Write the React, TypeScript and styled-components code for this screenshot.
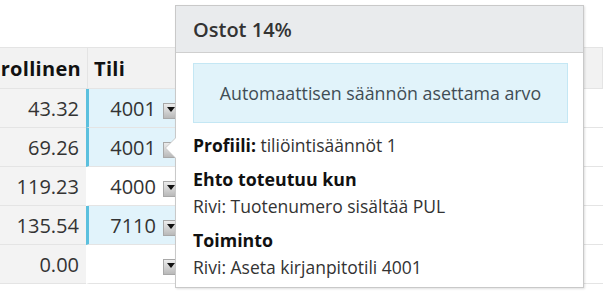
import { createGlobalStyle, styled } from "styled-components";

type Row = { amount: string; account: string; auto: boolean };

const rows: Row[] = [
  { amount: "43.32", account: "4001", auto: true },
  { amount: "69.26", account: "4001", auto: true },
  { amount: "119.23", account: "4000", auto: false },
  { amount: "135.54", account: "7110", auto: true },
  { amount: "0.00", account: "", auto: false },
];

const GlobalStyle = createGlobalStyle`
  html, body {
    margin: 0;
    padding: 0;
    background: #ffffff;
    font-family: "Open Sans", "Noto Sans", sans-serif;
    color: #333;
  }
`;

export default function App() {
  return (
    <Page>
      <GlobalStyle />
      <Table>
        <HeaderRow>
          <HeaderCell $clip>Verollinen</HeaderCell>
          <HeaderCell>Tili</HeaderCell>
          <HeaderCell />
        </HeaderRow>
        {rows.map((row, i) => (
          <BodyRow key={i}>
            <AmountCell>{row.amount}</AmountCell>
            <AccountCell $auto={row.auto}>
              <span>{row.account}</span>
              <DropButton />
            </AccountCell>
            <RestCell />
          </BodyRow>
        ))}
      </Table>

      <Popover>
        <PopoverTitle>Ostot 14%</PopoverTitle>
        <PopoverBody>
          <InfoBox>Automaattisen säännön asettama arvo</InfoBox>
          <Line>
            <strong>Profiili:</strong> tiliöintisäännöt 1
          </Line>
          <Section>
            <Heading>Ehto toteutuu kun</Heading>
            <Line>Rivi: Tuotenumero sisältää PUL</Line>
          </Section>
          <Section>
            <Heading>Toiminto</Heading>
            <Line>Rivi: Aseta kirjanpitotili 4001</Line>
          </Section>
        </PopoverBody>
      </Popover>
    </Page>
  );
}

const Page = styled.div`
  position: relative;
  width: 603px;
  height: 295px;
  overflow: hidden;
  padding-top: 47px;
  box-sizing: border-box;
`;

const Table = styled.div`
  display: grid;
  grid-template-columns: 88px 95px 1fr;
  border-top: 1px solid #e4e4e4;
`;

const HeaderRow = styled.div`
  display: contents;
`;

const HeaderCell = styled.div<{ $clip?: boolean }>`
  height: 40px;
  display: flex;
  align-items: center;
  justify-content: ${({ $clip }) => ($clip ? "flex-end" : "flex-start")};
  padding: 0 6px;
  background: #f2f2f2;
  border-bottom: 1px solid #e4e4e4;
  border-right: 1px solid #e4e4e4;
  font-size: 20px;
  font-weight: 700;
  letter-spacing: 0.3px;
  color: #111;
  white-space: nowrap;
  overflow: hidden;
  box-sizing: content-box;
`;

const BodyRow = styled.div`
  display: contents;
`;

const AmountCell = styled.div`
  height: 38px;
  display: flex;
  align-items: center;
  justify-content: flex-end;
  padding-right: 8px;
  background: #f3f3f3;
  border-bottom: 1px solid #e4e4e4;
  border-right: 1px solid #e4e4e4;
  font-size: 20px;
  color: #333;
`;

const AccountCell = styled.div<{ $auto: boolean }>`
  height: 38px;
  display: flex;
  align-items: center;
  justify-content: flex-end;
  gap: 7px;
  padding-right: 3px;
  background: ${({ $auto }) => ($auto ? "#e1f3fb" : "#ffffff")};
  border-left: 3px solid ${({ $auto }) => ($auto ? "#5bc0de" : "transparent")};
  margin-left: -2px;
  border-bottom: 1px solid #e4e4e4;
  border-right: 1px solid #e4e4e4;
  font-size: 20px;
  color: #333;
`;

const DropButton = styled.span`
  position: relative;
  align-self: flex-end;
  margin-bottom: 8px;
  width: 14px;
  height: 14px;
  border: 1px solid #a8a8a8;
  background: linear-gradient(#ececec, #b9b9b9);

  &::after {
    content: "";
    position: absolute;
    left: 3px;
    top: 3px;
    border-left: 4px solid transparent;
    border-right: 4px solid transparent;
    border-top: 5px solid #111;
  }
`;

const RestCell = styled.div`
  height: 38px;
  border-bottom: 1px solid #e4e4e4;
`;

const Popover = styled.div`
  position: absolute;
  top: 5px;
  left: 175px;
  width: 407px;
  height: 281px;
  background: #fff;
  border: 1px solid #c9c9c9;
  box-shadow: 1px 1px 2px rgba(0, 0, 0, 0.12);
  display: flex;
  flex-direction: column;

  &::before,
  &::after {
    content: "";
    position: absolute;
    top: 132px;
    border-top: 10px solid transparent;
    border-bottom: 10px solid transparent;
  }

  &::before {
    left: -11px;
    border-right: 10px solid #c9c9c9;
  }

  &::after {
    left: -10px;
    border-right: 10px solid #ffffff;
  }
`;

const PopoverTitle = styled.div`
  height: 46px;
  display: flex;
  align-items: center;
  padding-left: 17px;
  background: #e9ebed;
  border-bottom: 1px solid #cfcfcf;
  font-size: 20px;
  font-weight: 600;
  color: #333;
`;

const PopoverBody = styled.div`
  padding: 10px 15px 0 17px;
  display: flex;
  flex-direction: column;
`;

const InfoBox = styled.div`
  height: 58px;
  display: flex;
  align-items: center;
  justify-content: center;
  background: #e1f3fa;
  border: 1px solid #c4e7f4;
  font-size: 17.8px;
  color: #3f4d55;
  margin-bottom: 11px;
`;

const Section = styled.div`
  display: flex;
  flex-direction: column;
  gap: 5px;
  margin-top: 12px;
`;

const Heading = styled.div`
  font-size: 17.8px;
  font-weight: 700;
  color: #111;
  line-height: 22px;
`;

const Line = styled.div`
  font-size: 17.5px;
  line-height: 22px;
  color: #333;

  strong {
    color: #111;
    font-weight: 700;
  }
`;
